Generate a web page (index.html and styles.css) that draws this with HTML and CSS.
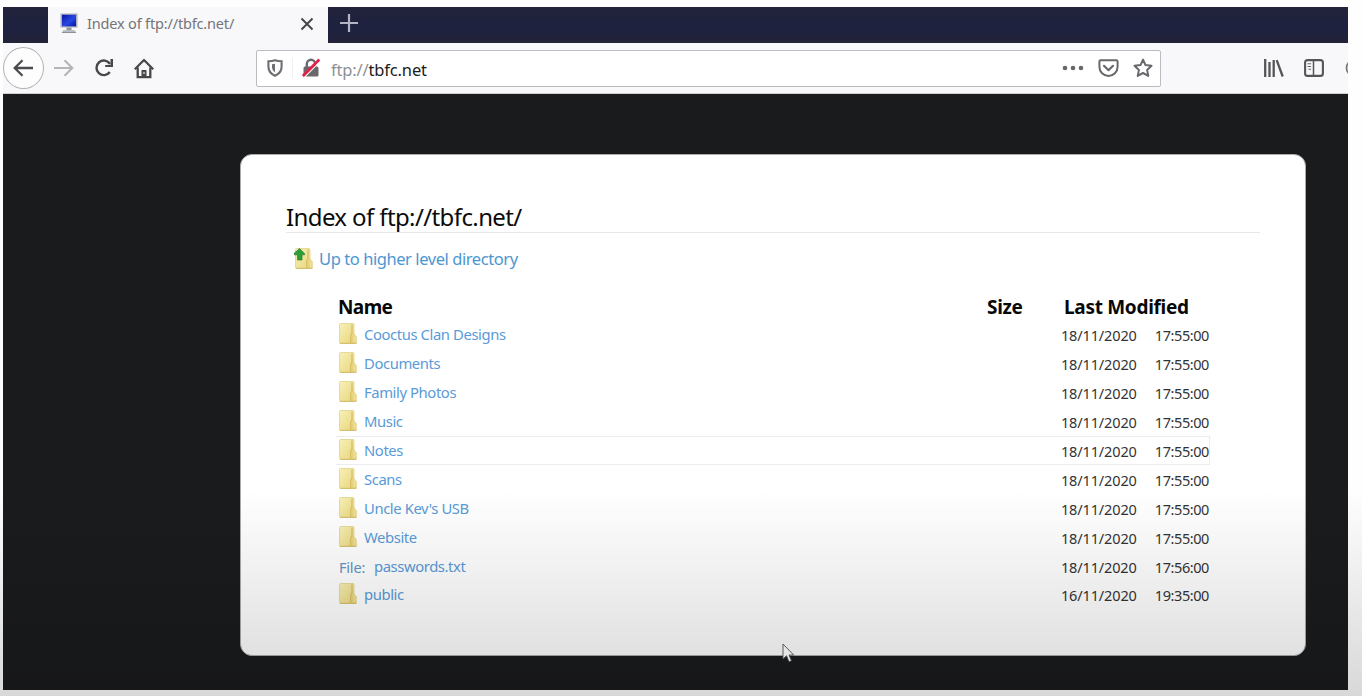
FILE: index.html
```html
<!DOCTYPE html>
<html lang="en">
<head>
<meta charset="utf-8">
<title>Index of ftp://tbfc.net/</title>
<link rel="stylesheet" href="styles.css">
</head>
<body>
<svg class="defs" width="0" height="0">
  <defs>
    <linearGradient id="fold" x1="0" y1="0" x2="1" y2="1"><stop offset="0" stop-color="#f7f0b8"/><stop offset="1" stop-color="#e9d67a"/></linearGradient>
    <linearGradient id="screen" x1="0" y1="0" x2="1" y2="1"><stop offset="0" stop-color="#0716a0"/><stop offset=".55" stop-color="#2848e4"/><stop offset="1" stop-color="#0510a0"/></linearGradient>
    <symbol id="folder" viewBox="0 0 18 21">
      <rect x=".5" y=".5" width="14.500" height="20" rx="1" fill="url(#fold)" stroke="#e6da98" stroke-width="1"/>
      <path d="M11.800 20V12l1.200-2V1.500" fill="none" stroke="#cdb45a" stroke-width="1"/>
      <path d="M14 10l3.300 3.500v6.500H14z" fill="#efdf92" stroke="#dcc975" stroke-width=".7"/>
      <path d="M1 20.300h16.500" stroke="#cfbb68" stroke-width="1"/>
    </symbol>
  </defs>
</svg>
<div class="browser">
  <div class="tabs">
    <div class="tab">
      <svg class="favicon" width="18" height="21" viewBox="0 0 18 21"><rect x=".5" y=".5" width="17" height="14" fill="#a9b0ba"/><rect x="2" y="1.800" width="14" height="11.500" fill="url(#screen)"/><path d="M6.500 14.500h5V17h-5z" fill="#8d949c"/><path d="M3.500 17h11l2 3h-15z" fill="#b9bdc2"/><path d="M2 19.500h14" stroke="#8c9196"/></svg>
      <span class="tab-title">Index of ftp://tbfc.net/</span>
      <svg class="close" width="14" height="14" viewBox="0 0 14 14"><path d="M1.500 1.500l11 11M12.500 1.500l-11 11" stroke="#444448" stroke-width="1.900"/></svg>
    </div>
    <svg class="plus" width="18" height="18" viewBox="0 0 18 18"><path d="M9 0v18M0 9h18" stroke="#b4b4c4" stroke-width="2.200"/></svg>
  </div>
  <div class="toolbar">
    <div class="back"><svg width="20" height="18" viewBox="0 0 20 18"><path d="M9.500 1.200L1.700 9l7.800 7.800M2 9h18" fill="none" stroke="#4a4a4f" stroke-width="2.300"/></svg></div>
    <svg class="forward" width="20" height="18" viewBox="0 0 20 18"><path d="M10.500 1.200L18.300 9l-7.800 7.800M18 9H0" fill="none" stroke="#b5b5b8" stroke-width="2.100"/></svg>
    <svg class="reload" width="20" height="20" viewBox="0 0 20 20"><path d="M15.800 14A7.300 7.300 0 1 1 16 6" fill="none" stroke="#48484c" stroke-width="2.400"/><path d="M19 1v8h-7.800v-2h5.300V1z" fill="#48484c"/></svg>
    <svg class="home" width="20" height="21" viewBox="0 0 20 21"><path d="M.8 11.300L10 2l9.200 9.300" fill="none" stroke="#48484c" stroke-width="2.300" stroke-linejoin="round"/><path d="M3.700 9.500v9.700h12.600V9.500" fill="none" stroke="#48484c" stroke-width="2.300"/><path d="M7.500 19v-7h5v7z" fill="#48484c"/><path d="M10 14v2" stroke="#ddd" stroke-width="1.300"/></svg>
    <div class="urlbar">
      <svg class="shield" width="16" height="18" viewBox="0 0 16 18"><path d="M8 1.200c2.200.8 4.300 1.100 6.600 1.100v5.200c0 4.500-2.600 7.500-6.600 9.300-4-1.800-6.600-4.800-6.600-9.300V2.300C3.700 2.300 5.800 2 8 1.200z" fill="none" stroke="#6f6f73" stroke-width="2.100"/><path d="M8 4.800v8.500C6 12 5 10.300 5 7.800V5.300z" fill="#6f6f73"/></svg>
      <span class="divider"></span>
      <svg class="lock" width="20" height="20" viewBox="0 0 20 20"><rect x="2.500" y="8.500" width="15" height="10" rx="1.500" fill="#69696d"/><path d="M5.800 9V6a4.200 4.200 0 0 1 8.400 0v3" fill="none" stroke="#69696d" stroke-width="2.400"/><path d="M3.500 19.200L19.500 3.200" stroke="#fff" stroke-width="1.200"/><path d="M1.800 18L18.300 1.500" stroke="#e61e4a" stroke-width="2.600"/></svg>
      <span class="url"><span class="scheme">ftp://</span>tbfc.net</span>
      <svg class="dots" width="22" height="6" viewBox="0 0 22 6"><g fill="#68686c"><circle cx="3" cy="3" r="2.300"/><circle cx="11" cy="3" r="2.300"/><circle cx="19" cy="3" r="2.300"/></g></svg>
      <svg class="pocket" width="21" height="18" viewBox="0 0 21 18"><path d="M2.700 1.300h15.600c.8 0 1.300.5 1.300 1.300v5.200a9.100 9.100 0 0 1-18.200 0V2.600c0-.8.500-1.300 1.300-1.300z" fill="none" stroke="#68686c" stroke-width="2"/><path d="M6 6.800l4.500 4.400L15 6.800" fill="none" stroke="#68686c" stroke-width="2.200" stroke-linecap="round" stroke-linejoin="round"/></svg>
      <svg class="star" width="20" height="20" viewBox="0 0 20 20"><path d="M10 1.600l2.500 5.500 6 .7-4.400 4.100 1.200 6L10 15l-5.300 2.900 1.200-6L1.500 7.800l6-.7z" fill="none" stroke="#68686c" stroke-width="2" stroke-linejoin="round"/></svg>
    </div>
    <svg class="library" width="20" height="18" viewBox="0 0 20 18"><path d="M1.200 0v18M5.500 3v15M9.700 1v17" stroke="#56565a" stroke-width="2.300"/><path d="M12.700 1.200l6 16.300" stroke="#56565a" stroke-width="2.300"/></svg>
    <svg class="sidebar" width="20" height="18" viewBox="0 0 20 18"><rect x="1.100" y="1.100" width="17.800" height="15.800" rx="2.500" fill="none" stroke="#56565a" stroke-width="2.100"/><path d="M9.500 1v16" stroke="#56565a" stroke-width="1.500"/><path d="M3.500 4.800h3.600M3.500 7.500h3.600M4.500 10.200h2.600" stroke="#68686c" stroke-width="1.100"/></svg>
    <svg class="account" width="20" height="18" viewBox="0 0 20 18"><circle cx="9.500" cy="9" r="8" fill="none" stroke="#77777b" stroke-width="1.800"/></svg>
  </div>
  <div class="page">
    <div class="card">
      <h1><span>Index of ftp://tbfc.net/</span></h1>
      <div class="up">
        <svg width="19" height="21" viewBox="0 0 19 21"><svg x="1" y="0" width="18" height="21"><use href="#folder"/></svg><path d="M5.500.5l5 5v1.300H8V12H3.500V6.800H0V5.500z" fill="#2c9d37" stroke="#278332" stroke-width=".7"/></svg>
        <a>Up to higher level directory</a>
      </div>
      <div class="listing">
        <div class="head"><b class="name">Name</b><b class="size">Size</b><b class="modified">Last Modified</b></div>
        <div class="row"><svg class="icon"><use href="#folder"/></svg><a>Cooctus Clan Designs</a><span class="date">18/11/2020</span><span class="time">17:55:00</span></div>
        <div class="row"><svg class="icon"><use href="#folder"/></svg><a>Documents</a><span class="date">18/11/2020</span><span class="time">17:55:00</span></div>
        <div class="row"><svg class="icon"><use href="#folder"/></svg><a>Family Photos</a><span class="date">18/11/2020</span><span class="time">17:55:00</span></div>
        <div class="row"><svg class="icon"><use href="#folder"/></svg><a>Music</a><span class="date">18/11/2020</span><span class="time">17:55:00</span></div>
        <div class="row hovered"><svg class="icon"><use href="#folder"/></svg><a>Notes</a><span class="date">18/11/2020</span><span class="time">17:55:00</span></div>
        <div class="row"><svg class="icon"><use href="#folder"/></svg><a>Scans</a><span class="date">18/11/2020</span><span class="time">17:55:00</span></div>
        <div class="row"><svg class="icon"><use href="#folder"/></svg><a>Uncle Kev's USB</a><span class="date">18/11/2020</span><span class="time">17:55:00</span></div>
        <div class="row"><svg class="icon"><use href="#folder"/></svg><a>Website</a><span class="date">18/11/2020</span><span class="time">17:55:00</span></div>
        <div class="row file"><span class="kind">File:</span><a>passwords.txt</a><span class="date">18/11/2020</span><span class="time">17:56:00</span></div>
        <div class="row"><svg class="icon"><use href="#folder"/></svg><a>public</a><span class="date">16/11/2020</span><span class="time">19:35:00</span></div>
      </div>
    </div>
  </div>
</div>
<div class="shade"></div>
<svg class="cursor" width="13" height="20" viewBox="0 0 13 20"><path d="M1 1v15l3.500-3.200L7 18.700l2.400-1L7 12h4.700z" fill="#e6e6e6" stroke="#4c4c4c" stroke-width=".9"/></svg>
</body>
</html>
```

FILE: styles.css
```css
* { box-sizing: border-box; }
body { margin: 0; height: 696px; overflow: hidden; background: #fdfefd; padding: 7px 14px 6px 3px; font-family: "Noto Sans", "Open Sans", sans-serif; }
.defs { position: absolute; }
svg { flex: none; display: block; }
.browser { width: 1345px; height: 683px; overflow: hidden; }
.tabs { height: 36px; background: linear-gradient(#22223a, #1e2240 60%, #222238); display: flex; padding-left: 45px; align-items: center; }
.tab { width: 280px; height: 36px; background: #f8f8fa; display: flex; align-items: center; padding-left: 12px; }
.favicon { margin-top: -3px; }
.tab-title { margin-left: 9px; width: 213px; font-size: 14.5px; letter-spacing: -.17px; color: #747478; white-space: nowrap; margin-top: -4px; }
.close { margin-top: -3px; }
.plus { margin: -5px 0 0 12px; }
.toolbar { height: 51px; background: #f8f8fa; border-bottom: 1px solid #d0d0d2; display: flex; align-items: center; overflow: hidden; }
.back { width: 41px; height: 42px; flex: none; border: 1px solid #b2b2b4; border-radius: 50%; background: #fdfdfd; display: flex; align-items: center; justify-content: center; padding-right: 2px; }
.forward { margin-left: 10px; }
.reload { margin-left: 20px; }
.home { margin-left: 20px; }
.urlbar { margin-left: 102px; width: 905px; height: 37px; flex: none; background: #fff; border: 1px solid #bcbcc0; border-radius: 2px; display: flex; align-items: center; padding-left: 10px; }
.divider { width: 1px; height: 20px; margin-left: 9px; background: #f0f0f2; }
.lock { margin-left: 8px; }
.url { margin-left: 10px; width: 731px; font-size: 16.500px; letter-spacing: -.16px; color: #1c1c20; margin-top: 2px; }
.scheme { color: #8f8f94; }
.pocket { margin-left: 14px; }
.star { margin-left: 14px; }
.library { margin-left: 103px; }
.sidebar { margin-left: 20px; }
.account { margin-left: 21px; }
.page { height: 596px; background: #1a1b1d; padding: 60px 42px 34px 237px; }
.card { height: 502px; border: 1px solid #aaabac; border-radius: 12px; background: #fff; padding: 44px 45px 0; }
h1 { margin: 0; height: 34px; border-bottom: 1px solid #e8e8ea; font-size: 24px; font-weight: 400; line-height: 36px; letter-spacing: -.61px; color: #0c0c0c; white-space: nowrap; }
.up { display: flex; align-items: center; height: 51px; padding-left: 8px; }
.up svg { margin-top: -1px; }
.up a { margin: -1px 0 0 6px; font-size: 16.500px; letter-spacing: -.43px; color: #4d97d0; }
.listing { margin-left: 50px; width: 874px; padding-top: 9px; }
.head { display: flex; height: 27px; padding-left: 2px; line-height: 28px; font-size: 19px; color: #080808; letter-spacing: -.3px; }
.head .name { width: 649px; letter-spacing: -.6px; }
.head .size { width: 77px; }
.row { height: 29px; display: flex; align-items: center; padding-left: 3px; color: #333; font-size: 14.500px; letter-spacing: -.2px; border: 1px solid transparent; border-width: 1px 1px 1px 0; white-space: nowrap; }
.row a { margin: -1px 0 0 7px; width: 698px; color: #5a9ad8; font-size: 14.800px; letter-spacing: -.4px; }
.icon { width: 18px; height: 21px; margin-top: -3px; }
.hovered { border-color: #ececee; }
.date { width: 94px; margin-top: 1px; letter-spacing: -.14px; }
.time { margin-top: 1px; letter-spacing: -.42px; }
.file { height: 28px; }
.file .kind { width: 28px; color: #6295c4; margin-top: 2px; }
.file a { width: 688px; }
.shade { position: absolute; inset: 490px 0 0; background: linear-gradient(transparent, rgba(0,0,0,.15)); pointer-events: none; }
.cursor { position: absolute; left: 782px; top: 643px; }
```
